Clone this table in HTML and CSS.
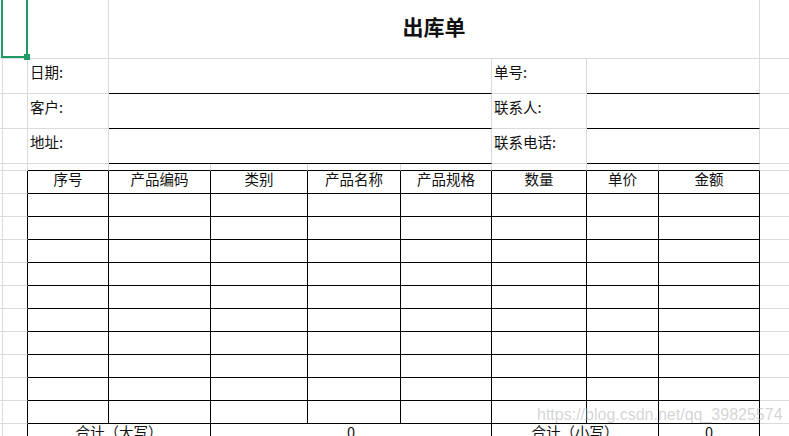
FILE: index.html
```html
<!DOCTYPE html>
<html lang="zh-CN">
<head>
<meta charset="utf-8">
<title>出库单</title>
<link rel="stylesheet" href="styles.css">
</head>
<body>
<div class="sheet">
  <!-- row 1 -->
  <div class="c"></div><div class="c"></div><div class="c"></div>
  <div class="c title s7">出库单</div><div class="c"></div>
  <!-- row 2 -->
  <div class="c"></div><div class="c"></div><div class="c label">日期:</div>
  <div class="c ub s4"></div><div class="c label">单号:</div><div class="c ub s2"></div><div class="c"></div>
  <!-- row 3 -->
  <div class="c"></div><div class="c"></div><div class="c label">客户:</div>
  <div class="c ub s4"></div><div class="c label">联系人:</div><div class="c ub s2"></div><div class="c"></div>
  <!-- row 4 -->
  <div class="c"></div><div class="c"></div><div class="c label">地址:</div>
  <div class="c ub s4"></div><div class="c label">联系电话:</div><div class="c ub s2"></div><div class="c"></div>
  <!-- row 5 spacer -->
  <div class="c"></div><div class="c"></div>
  <div class="c ub"></div><div class="c ub"></div><div class="c ub"></div><div class="c ub"></div><div class="c ub"></div><div class="c ub"></div><div class="c ub"></div><div class="c ub"></div>
  <div class="c"></div>
  <!-- header -->
  <div class="c"></div><div class="c rb"></div>
  <div class="c t h">序号</div><div class="c t h">产品编码</div><div class="c t h">类别</div><div class="c t h">产品名称</div><div class="c t h">产品规格</div><div class="c t h">数量</div><div class="c t h">单价</div><div class="c t h">金额</div>
  <div class="c"></div>
  <!-- data rows -->
  <div class="c"></div><div class="c rb"></div><div class="c t"></div><div class="c t"></div><div class="c t"></div><div class="c t"></div><div class="c t"></div><div class="c t"></div><div class="c t"></div><div class="c t"></div><div class="c"></div>
  <div class="c"></div><div class="c rb"></div><div class="c t"></div><div class="c t"></div><div class="c t"></div><div class="c t"></div><div class="c t"></div><div class="c t"></div><div class="c t"></div><div class="c t"></div><div class="c"></div>
  <div class="c"></div><div class="c rb"></div><div class="c t"></div><div class="c t"></div><div class="c t"></div><div class="c t"></div><div class="c t"></div><div class="c t"></div><div class="c t"></div><div class="c t"></div><div class="c"></div>
  <div class="c"></div><div class="c rb"></div><div class="c t"></div><div class="c t"></div><div class="c t"></div><div class="c t"></div><div class="c t"></div><div class="c t"></div><div class="c t"></div><div class="c t"></div><div class="c"></div>
  <div class="c"></div><div class="c rb"></div><div class="c t"></div><div class="c t"></div><div class="c t"></div><div class="c t"></div><div class="c t"></div><div class="c t"></div><div class="c t"></div><div class="c t"></div><div class="c"></div>
  <div class="c"></div><div class="c rb"></div><div class="c t"></div><div class="c t"></div><div class="c t"></div><div class="c t"></div><div class="c t"></div><div class="c t"></div><div class="c t"></div><div class="c t"></div><div class="c"></div>
  <div class="c"></div><div class="c rb"></div><div class="c t"></div><div class="c t"></div><div class="c t"></div><div class="c t"></div><div class="c t"></div><div class="c t"></div><div class="c t"></div><div class="c t"></div><div class="c"></div>
  <div class="c"></div><div class="c rb"></div><div class="c t"></div><div class="c t"></div><div class="c t"></div><div class="c t"></div><div class="c t"></div><div class="c t"></div><div class="c t"></div><div class="c t"></div><div class="c"></div>
  <div class="c"></div><div class="c rb"></div><div class="c t"></div><div class="c t"></div><div class="c t"></div><div class="c t"></div><div class="c t"></div><div class="c t"></div><div class="c t"></div><div class="c t"></div><div class="c"></div>
  <div class="c"></div><div class="c rb"></div><div class="c t"></div><div class="c t"></div><div class="c t"></div><div class="c t"></div><div class="c t"></div><div class="c t"></div><div class="c t"></div><div class="c t"></div><div class="c"></div>
  <!-- totals -->
  <div class="c"></div><div class="c rb"></div>
  <div class="c t h s2">合计（大写）</div><div class="c t h s3">0</div><div class="c t h s2">合计（小写）</div><div class="c t h">0</div>
  <div class="c"></div>

  <div class="selection"></div>
  <div class="handle"></div>
  <div class="watermark">https://blog.csdn.net/qq_39825574</div>
</div>
</body>
</html>
```
FILE: styles.css
```css
html, body {
  margin: 0;
  padding: 0;
  background: #fff;
}
body {
  overflow: hidden;
  font-family: "Noto Sans CJK SC", "Noto Sans", sans-serif;
  color: #111;
}
.sheet {
  position: relative;
  display: grid;
  grid-template-columns: 3px 25px 81px 102px 97px 93px 91px 95px 72px 101px 60px;
  grid-template-rows: 59px 35px 35px 35px 7px repeat(12, 23px);
}
.c {
  box-sizing: border-box;
  border-right: 1px solid #dadada;
  border-bottom: 1px solid #dadada;
  display: flex;
  align-items: center;
  min-width: 0;
  white-space: nowrap;
}
.ub { border-bottom-color: #000; }
.rb { border-right-color: #000; }
.t { border-right-color: #000; border-bottom-color: #000; }
.s2 { grid-column: span 2; }
.s3 { grid-column: span 3; }
.s4 { grid-column: span 4; }
.s7 { grid-column: span 7; }
.title {
  justify-content: center;
  font-weight: bold;
  font-size: 21px;
  padding-bottom: 7px;
}
.label {
  font-size: 14.5px;
  padding-left: 2px;
  padding-bottom: 9px;
}
.h {
  justify-content: center;
  font-size: 14.5px;
  line-height: 16px;
  padding-bottom: 6px;
}
.selection {
  position: absolute;
  left: 1px;
  top: -2px;
  width: 27px;
  height: 60px;
  box-sizing: border-box;
  border: 2px solid #1f9b66;
}
.handle {
  position: absolute;
  left: 24px;
  top: 54px;
  width: 6px;
  height: 6px;
  background: #1f9b66;
}
.watermark {
  position: absolute;
  left: 537px;
  top: 406px;
  font-family: "Liberation Sans", Arial, sans-serif;
  font-size: 16px;
  color: rgba(175, 175, 175, 0.55);
  white-space: nowrap;
}
```
